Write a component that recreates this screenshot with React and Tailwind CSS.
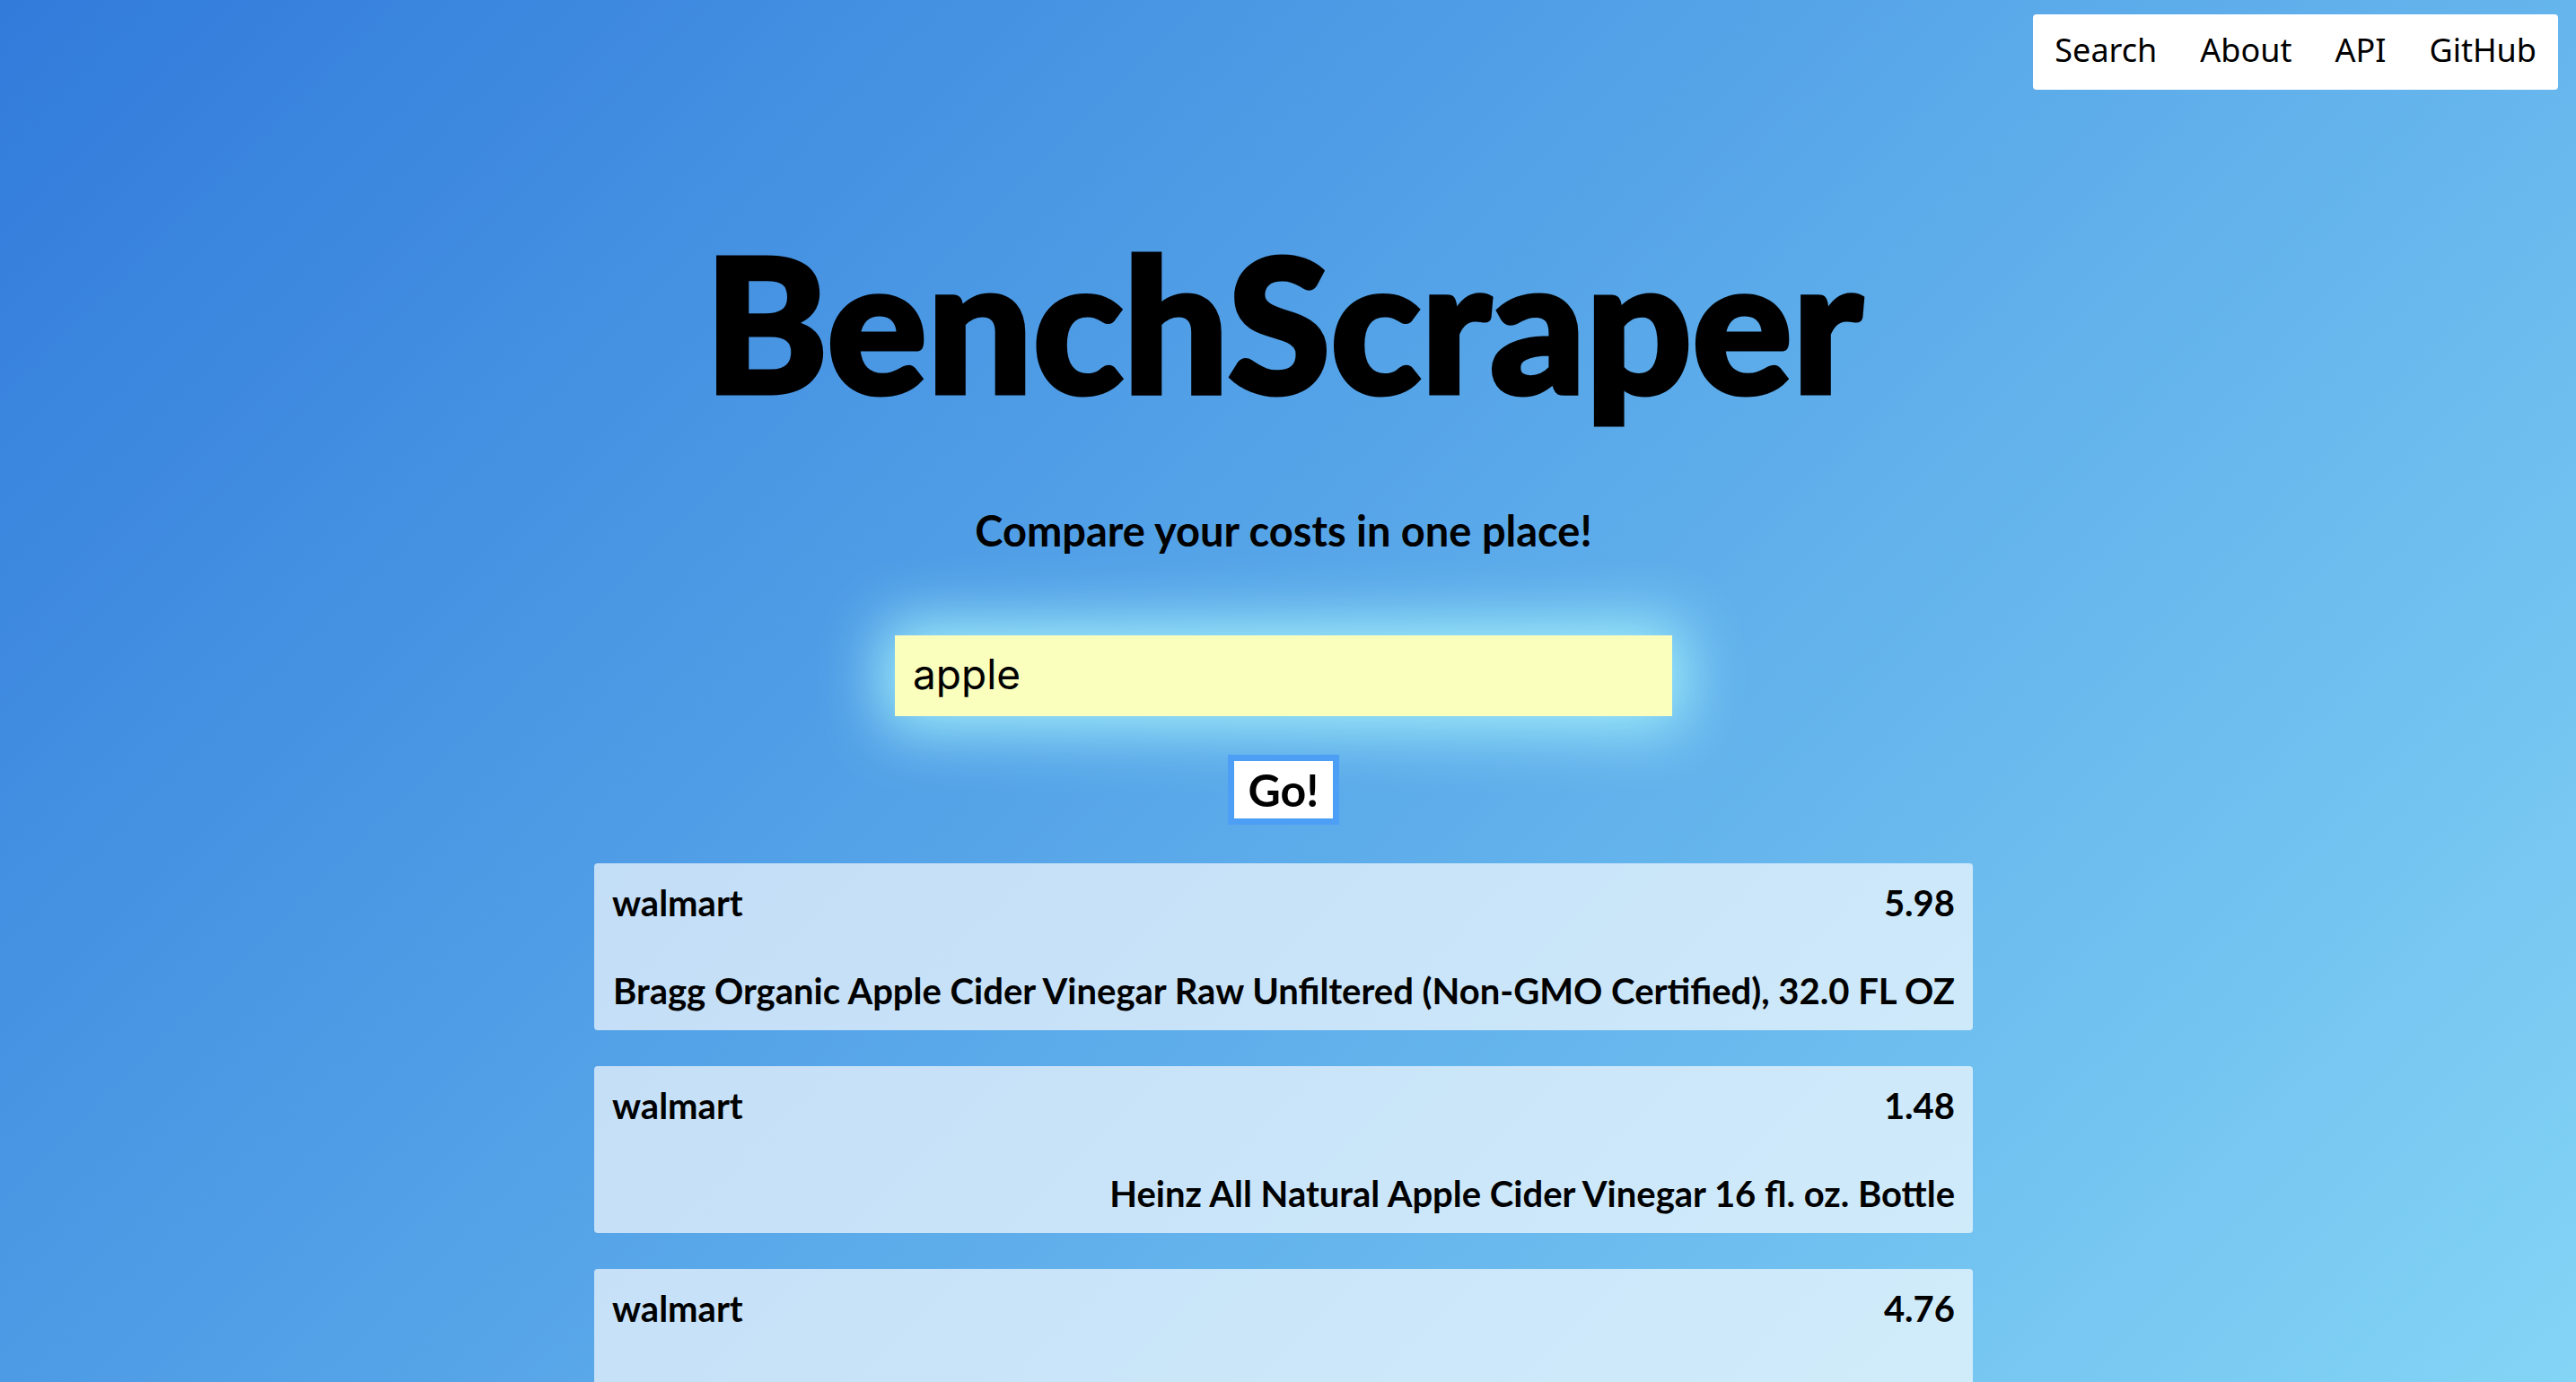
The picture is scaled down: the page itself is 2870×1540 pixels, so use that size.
import { useState } from "react";

const links = ["Search", "About", "API", "GitHub"];

const results = [
  {
    store: "walmart",
    price: "5.98",
    name: "Bragg Organic Apple Cider Vinegar Raw Unfiltered (Non-GMO Certified), 32.0 FL OZ",
  },
  {
    store: "walmart",
    price: "1.48",
    name: "Heinz All Natural Apple Cider Vinegar 16 fl. oz. Bottle",
  },
  { store: "walmart", price: "4.76", name: "" },
];

function NavBar() {
  return (
    <nav className="flex justify-end px-5 pt-4">
      <ul className="flex h-[84px] items-center gap-12 rounded bg-white px-6 pb-1 font-['Noto_Sans',sans-serif] text-[36px] leading-[48px]">
        {links.map((label) => (
          <li key={label}>
            <a href={`#${label.toLowerCase()}`}>{label}</a>
          </li>
        ))}
      </ul>
    </nav>
  );
}

function ResultCard({ store, price, name }) {
  return (
    <li className="flex flex-col gap-[50px] rounded bg-white/66 p-5 text-[40px] leading-[48px] font-bold">
      <div className="flex justify-between">
        <span>{store}</span>
        <span>{price}</span>
      </div>
      <p className="min-h-12 text-right">{name}</p>
    </li>
  );
}

export default function App() {
  const [query, setQuery] = useState("apple");

  return (
    <div className="h-screen overflow-y-auto bg-linear-135 from-[#327bdb] to-[#83d4f5] font-[Lato,sans-serif] text-black [scrollbar-width:none]">
      <NavBar />
      <main className="flex flex-col items-center pt-[138px] pr-[10px] pb-10">
        <h1 className="text-[208px] leading-[240px] font-black [-webkit-text-stroke:5px_black]">
          BenchScraper
        </h1>
        <h2 className="mt-[84px] text-[47px] leading-[58px] font-bold">
          Compare your costs in one place!
        </h2>
        <form
          className="mt-[88px] flex w-full flex-col items-center gap-[50px]"
          onSubmit={(event) => event.preventDefault()}
        >
          <input
            type="text"
            aria-label="Search for a product"
            value={query}
            onChange={(event) => setQuery(event.target.value)}
            className="h-[90px] w-[866px] max-w-full bg-[#faffbd] px-5 pb-1 font-[Inter,sans-serif] text-[46px] leading-[58px] shadow-[0_0_70px_12px_#a8f4fb] outline-none"
          />
          <button
            type="submit"
            className="h-16 bg-white px-4 text-[50px] leading-[58px] font-bold outline-7 outline-[#4d9ff5]"
          >
            Go!
          </button>
        </form>
        <ul className="mt-[50px] flex w-[1536px] max-w-full flex-col gap-10">
          {results.map((item) => (
            <ResultCard key={item.price} {...item} />
          ))}
        </ul>
      </main>
    </div>
  );
}
